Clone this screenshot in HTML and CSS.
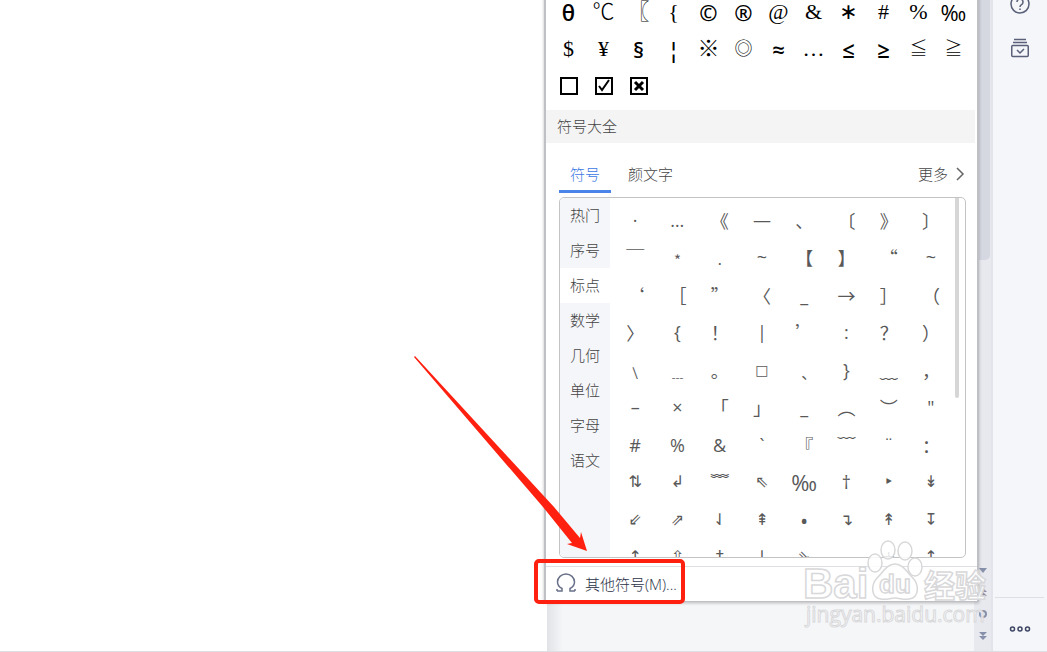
FILE: index.html
```html
<!DOCTYPE html>
<html lang="zh-CN">
<head>
  <meta charset="UTF-8">
  <meta name="viewport" content="width=device-width, initial-scale=1.0">
  <title>符号</title>
  <link rel="stylesheet" href="styles.css">
</head>
<body>
  <div class="app">
    <div class="workspace">
      <main class="document"></main>
      <div class="canvas"></div>
    </div>

    <div class="scroll-rail">
      <div class="scroll-thumb"></div>
      <div class="rail-buttons">
        <svg width="10" height="10" viewBox="0 0 10 10"><path d="M1 3h8L5 8z"/></svg>
        <svg width="10" height="10" viewBox="0 0 10 10"><path d="M1 5l4-4 4 4zM1 9l4-4 4 4z"/></svg>
        <svg width="10" height="10" viewBox="0 0 10 10"><circle cx="5" cy="5" r="3" class="ring"/></svg>
        <svg width="10" height="10" viewBox="0 0 10 10"><path d="M1 1h8L5 5zM1 5h8L5 9z"/></svg>
      </div>
    </div>

    <aside class="sidebar">
      <button class="side-btn" aria-label="帮助">
        <svg width="20" height="20" viewBox="0 0 20 20"><circle cx="10" cy="10" r="9"/><path d="M7 8a3 3 0 1 1 4.500 2.600Q10 11.500 10 13M10 14.500v1.500"/></svg>
      </button>
      <button class="side-btn" aria-label="备份">
        <svg width="20" height="20" viewBox="0 0 20 20"><path d="M4 1.500h12M3 4.500h14"/><rect x="1.750" y="7.500" width="16.500" height="11" rx="1"/><path d="M7 12l3 3 4-4"/></svg>
      </button>
      <button class="side-btn more-btn" aria-label="更多">
        <svg width="22" height="8" viewBox="0 0 22 8"><circle cx="3.500" cy="4" r="2"/><circle cx="11" cy="4" r="2"/><circle cx="18.500" cy="4" r="2"/></svg>
      </button>
    </aside>
  </div>

  <div class="symbol-menu">
    <div class="recent">
      <button class="bold">θ</button><button>℃</button><button>〖</button><button>{</button><button class="bold">©</button><button class="bold">®</button><button>@</button><button>&amp;</button><button class="math">∗</button><button>#</button><button>%</button><button class="sans">‰</button>
      <button>$</button><button>¥</button><button class="bold">§</button><button class="bold">¦</button><button>※</button><button class="small">◎</button><button class="bold">≈</button><button>…</button><button class="bold">≤</button><button class="bold">≥</button><button class="small">≦</button><button class="small">≧</button>
      <button aria-label="方框"><svg width="18" height="18" viewBox="0 0 18 18"><rect x="1" y="1" width="16" height="16"/></svg></button>
      <button aria-label="勾选"><svg width="18" height="18" viewBox="0 0 18 18"><rect x="1" y="1" width="16" height="16"/><path class="tick" d="M4 9l3 4 7-10"/></svg></button>
      <button aria-label="打叉"><svg width="18" height="18" viewBox="0 0 18 18"><rect x="1" y="1" width="16" height="16"/><path class="cross" d="M5 5l8 8M13 5l-8 8"/></svg></button>
    </div>

    <h2 class="section-title">符号大全</h2>

    <div class="tabs">
      <button class="tab active">符号</button>
      <button class="tab">颜文字</button>
      <a class="more" href="#">更多
        <svg width="9" height="14" viewBox="0 0 9 14"><path d="M1 1l6 6-6 6"/></svg>
      </a>
    </div>

    <div class="picker">
      <nav class="categories">
        <button>热门</button>
        <button>序号</button>
        <button class="selected">标点</button>
        <button>数学</button>
        <button>几何</button>
        <button>单位</button>
        <button>字母</button>
        <button>语文</button>
      </nav>
      <div class="glyphs">
        <button class="latin">·</button><button class="latin">…</button><button>《</button><button class="latin">—</button><button>、</button><button>〔</button><button>》</button><button>〕</button>
        <button>￣</button><button>﹡</button><button>﹒</button><button class="latin">~</button><button>【</button><button>】</button><button>“</button><button class="latin">~</button>
        <button>‘</button><button>［</button><button>”</button><button>〈</button><button class="latin">_</button><button>→</button><button>］</button><button>（</button>
        <button>〉</button><button class="latin">{</button><button>！</button><button class="latin">|</button><button>’</button><button class="latin">:</button><button>？</button><button>）</button>
        <button>﹨</button><button>﹍</button><button>。</button><button class="box">□</button><button>﹑</button><button class="latin">}</button><button>﹏</button><button>，</button>
        <button class="latin">–</button><button class="latin">×</button><button>「</button><button>」</button><button class="latin">_</button><button>︵</button><button>︶</button><button class="latin">"</button>
        <button class="latin">#</button><button class="latin">%</button><button class="latin">&amp;</button><button class="latin">`</button><button>『</button><button>﹋</button><button class="latin">¨</button><button>：</button>
        <button class="arrow">⇅</button><button class="arrow">↲</button><button>﹌</button><button class="arrow">⇖</button><button class="latin wide">‰</button><button class="latin">†</button><button class="arrow">‣</button><button class="arrow">↡</button>
        <button class="arrow">⇙</button><button class="arrow">⇗</button><button class="arrow">⇃</button><button class="arrow">⇞</button><button class="latin wide">•</button><button class="arrow">↴</button><button class="arrow">↟</button><button class="arrow">↧</button>
        <button class="arrow">↑</button><button class="arrow">⇧</button><button class="arrow">‡</button><button class="arrow">↓</button><button class="arrow">⇘</button><button class="arrow"></button><button class="arrow">+</button><button class="arrow">↑</button>
      </div>
      <div class="picker-scroll"></div>
    </div>

    <button class="other-symbols">
      <svg width="20" height="20" viewBox="0 0 20 20"><path d="M1 18h5v-2.500C3 14 1.500 11.500 1.500 9a8.500 8 0 0 1 17 0c0 2.500-1.500 5-4.500 6.500V18h5M1 18v-2M19 18v-2"/></svg>
      其他符号(M)...
    </button>
  </div>

  <svg class="arrow-mark" width="176" height="198" viewBox="0 0 176 198"><path d="M1 2L2 1L141 152L167 183L168 177L174 196L154 189L159 188L130 152z"/></svg>
  <div class="highlight"></div>

  <svg class="watermark" width="192" height="92" viewBox="0 0 192 92">
    <g class="paw">
      <ellipse cx="72" cy="25" rx="7" ry="9"/>
      <ellipse cx="85" cy="12" rx="7" ry="9"/>
      <ellipse cx="102" cy="13" rx="7" ry="9"/>
      <ellipse cx="112" cy="29" rx="7" ry="9"/>
      <path d="M92 26c8 0 12 8 17 13 8 8 7 21-3 22-6 1-9-1-14-1s-8 2-14 1c-10-1-11-14-3-22 5-5 9-13 17-13z"/>
    </g>
    <text class="brand" x="0" y="60">Bai</text>
    <text class="du" x="76" y="55">du</text>
    <text class="cn" x="121" y="59">经验</text>
    <text class="url" x="3" y="84">jingyan.baidu.com</text>
  </svg>
</body>
</html>
```
FILE: styles.css
```css
* {
  box-sizing: border-box;
}

body {
  margin: 0;
  overflow: hidden;
  font-family: "Noto Sans CJK SC", sans-serif;
  font-size: 15px;
  font-weight: 300;
  color: #444;
}

button {
  border: 0;
  padding: 0;
  background: none;
  font: inherit;
  color: inherit;
}

svg {
  fill: none;
  display: block;
}

.app {
  display: flex;
  height: 100vh;
  border-bottom: 1px solid #dcdee4;
}

.workspace {
  flex: 1;
  display: flex;
}

.document {
  flex: 1;
  background: #fff;
}

.canvas {
  width: 427px;
  background: linear-gradient(to right, #e1e3e6, #f5f6f8 16px);
}

.scroll-rail {
  width: 19px;
  display: flex;
  flex-direction: column;
  justify-content: space-between;
  background: #e8e9ef;
  border-right: 2px solid #e3e4eb;
}

.scroll-thumb {
  width: 16px;
  height: 260px;
  background: #d5d7e1;
  border-radius: 0 0 5px 5px;
}

.rail-buttons {
  display: flex;
  flex-direction: column;
  align-items: center;
  gap: 12px;
  padding-bottom: 10px;
}

.rail-buttons svg {
  fill: #8790aa;
}

.rail-buttons .ring {
  fill: none;
  stroke: #8790aa;
  stroke-width: 2;
}

/* Right tool strip */
.sidebar {
  width: 54px;
  display: flex;
  flex-direction: column;
  background: #f5f6f9;
}

.side-btn {
  height: 44px;
  display: flex;
  justify-content: center;
  align-items: center;
}

.side-btn:first-child {
  margin-top: -18px;
}

.side-btn svg {
  stroke: #596078;
  stroke-width: 1.5;
}

.more-btn {
  height: 54px;
  margin: auto 3px 0 2px;
  padding-top: 9px;
  border-top: 1px solid #dddfe6;
}

.more-btn svg {
  stroke: #3d4663;
}

/* Symbol drop-down */
.symbol-menu {
  position: absolute;
  top: -7px;
  right: 68px;
  width: 435px;
  background: #fff;
  border: 1px solid #bfc0c6;
  border-width: 0 2px 1px 2px;
  box-shadow: 0 1px 3px rgba(0, 0, 0, 0.25);
}

.recent {
  display: grid;
  grid-template-columns: repeat(12, 35px);
  grid-auto-rows: 37px;
  padding: 0 5px;
  font-family: "Liberation Serif", "Noto Sans CJK SC", serif;
  font-size: 22px;
  color: #000;
}

.recent button {
  display: flex;
  justify-content: center;
  align-items: center;
  min-width: 0;
  min-height: 0;
  line-height: 36px;
}

.recent .bold {
  font-family: "Open Sans", sans-serif;
  font-weight: 600;
  font-size: 22px;
}

.recent .sans {
  font-family: "Open Sans", sans-serif;
  font-weight: 400;
}

.recent .math {
  font-family: "DejaVu Sans", sans-serif;
  font-weight: 400;
}

.recent .small {
  font-size: 18px;
}

.recent svg {
  stroke: #000;
  stroke-width: 2;
}

.recent .cross {
  stroke-width: 3;
}

.section-title {
  margin: 6px 2px 0 0;
  padding: 0 0 2px 11px;
  background: #f4f4f4;
  font-size: 15px;
  line-height: 31px;
  font-weight: 300;
}

.tabs {
  display: flex;
  align-items: center;
  gap: 17px;
  padding: 13px 12px 4px 13px;
}

.tab {
  height: 37px;
  border-bottom: 3px solid transparent;
}

.tab.active {
  width: 52px;
  border-bottom-color: #4a84e8;
  color: #3c78e4;
}

.more {
  display: flex;
  align-items: center;
  gap: 8px;
  margin-left: auto;
  padding-bottom: 2px;
  color: inherit;
  text-decoration: none;
}

.more svg {
  stroke: #666;
  stroke-width: 1.5;
}

.picker {
  display: flex;
  height: 361px;
  margin: 0 11px 8px 13px;
  border: 1px solid #c4c4c4;
  border-radius: 5px;
  overflow: hidden;
}

.categories {
  width: 50px;
  display: flex;
  flex-direction: column;
  background: #f5f6f9;
}

.categories button {
  height: 35px;
  padding-bottom: 2px;
}

.categories .selected {
  background: #fff;
}

.glyphs {
  flex: 1;
  display: grid;
  grid-template-columns: repeat(8, 1fr);
  grid-template-rows: repeat(10, 1fr);
  height: 375px;
  margin-top: 3px;
  padding: 0 3px 0 4px;
  font-size: 18px;
  font-weight: 400;
  color: #595959;
}

.glyphs button {
  min-width: 0;
  min-height: 0;
  line-height: 36px;
  white-space: nowrap;
}

.glyphs .latin {
  font-family: "Open Sans", sans-serif;
}

.glyphs .wide {
  font-size: 22px;
}

.glyphs .box,
.glyphs .arrow {
  font-family: "DejaVu Sans", sans-serif;
  font-size: 16px;
}

.glyphs .box {
  font-size: 14px;
}

.picker-scroll {
  width: 4px;
  height: 200px;
  margin-right: 6px;
  background: #d6d6d6;
  border-radius: 0 0 2px 2px;
}

.other-symbols {
  width: 100%;
  height: 35px;
  display: flex;
  align-items: center;
  gap: 9px;
  padding: 0 0 2px 10px;
  border-top: 1px solid #dddfe5;
  font-family: "Open Sans", "Noto Sans CJK SC", sans-serif;
  color: #2c3247;
}

.other-symbols svg {
  stroke: #69718a;
  stroke-width: 1.5;
}

/* Annotation marks over the menu */
.arrow-mark {
  position: absolute;
  top: 355px;
  right: 458px;
  fill: #ff2010;
}

.highlight {
  position: absolute;
  top: 559px;
  right: 362px;
  width: 151px;
  height: 45px;
  border: 4px solid #ff2010;
  border-radius: 5px;
}

.watermark {
  position: absolute;
  top: 538px;
  right: 52px;
  font-family: "Open Sans", "Noto Sans CJK SC", sans-serif;
  fill: rgba(255, 255, 255, 0.85);
  stroke: #d8d8da;
  stroke-width: 1.5;
}

.brand {
  font-family: "Liberation Sans", sans-serif;
  font-size: 42px;
  font-weight: 700;
}

.du {
  font-family: "Liberation Sans", sans-serif;
  font-size: 26px;
  font-weight: 700;
}

.cn {
  font-size: 31px;
  font-weight: 700;
}

.url {
  font-size: 21px;
  font-weight: 400;
  stroke-width: 1;
}
```
